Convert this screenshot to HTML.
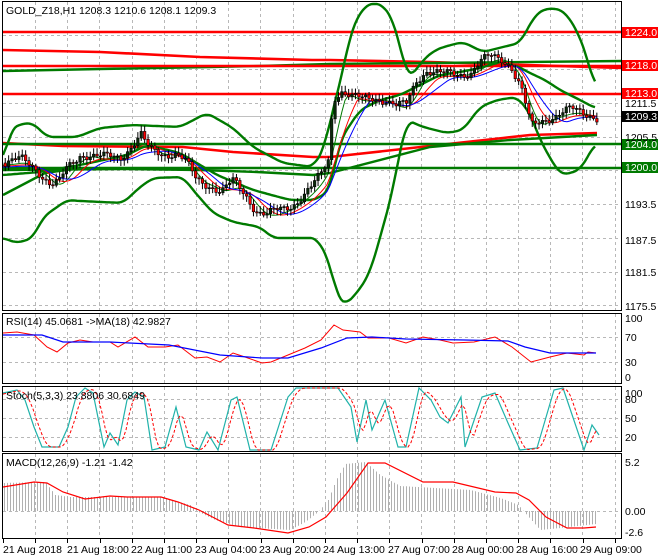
<!DOCTYPE html>
<html><head><meta charset="utf-8"><style>
html,body{margin:0;padding:0;background:#fff;width:660px;height:560px;overflow:hidden}
svg{display:block}
text{font-family:"Liberation Sans",sans-serif;font-size:10.5px;fill:#000}
.g{stroke:#b8b8b8;stroke-width:1;stroke-dasharray:3,3;fill:none}
.bb{stroke:#007a00;stroke-width:2.4;fill:none;stroke-linejoin:round}
.rl{stroke:#ff0000;stroke-width:2.6;fill:none}
</style></head><body>
<svg id="s" width="660" height="560" viewBox="0 0 660 560" xmlns="http://www.w3.org/2000/svg">
<rect width="660" height="560" fill="#fff"/>
<g class="g" id="vg"></g>
<g class="g">
<path d="M3 35.5H621M3 69.5H621M3 103.5H621M3 137.5H621M3 170.5H621M3 204.5H621M3 238.5H621M3 272.5H621M3 305.5H621"/>
<path d="M3 337.5H621M3 362.5H621M3 399.5H621M3 418.5H621M3 437.5H621M3 511.5H621"/>
</g>
<path d="M3 116.5H621" stroke="#c0c0c0" stroke-width="1"/>

<polyline class="rl" points="3,50 100,52 200,57 312,60 330,60 430,62 622,68"/>
<polyline class="bb" points="3,71 100,69 210,67 260,66 330,64 430,63 622,61"/>
<polyline class="rl" points="3,143 63,146 183,147 233,152 313,157 330,157 457,143 503,138 530,135 597,133"/>
<polyline class="bb" points="3,170 120,169 200,170 257,172 313,175 330,173 430,147 510,140 597,135"/>
<polyline class="bb" points="3,195 45,173 80,168"/>

<path d="M3 32H621M3 94H621" stroke="#ff0000" stroke-width="2.6"/>
<path d="M3 66H621" stroke="#ff0000" stroke-width="2.6"/>
<path d="M3 144H621M3 168H621" stroke="#007a00" stroke-width="2.6"/>

<polyline id="bu" class="bb" points="3,163 10,130 20,124 33,123 47,137 77,137 100,128 133,125 180,127 207,113 233,128 253,147 283,163 313,167 325,147 330,120 337,95 343,70 350,35 357,18 365,6 373,3 383,5 393,20 400,45 405,70 410,78 423,60 435,50 447,46 463,42 483,52 503,47 520,43 527,30 535,15 547,8 563,10 577,30 587,57 595,88"/>
<polyline id="bl" class="bb" points="3,238 17,243 33,238 43,217 67,200 80,201 123,203 140,187 153,178 183,177 193,190 213,213 233,222 260,227 273,238 317,238 330,263 337,297 345,305 357,293 370,273 383,227 393,190 400,150 407,120 423,127 447,133 463,130 480,107 497,100 517,97 530,113 540,140 557,170 563,175 580,170 590,153 595,143"/>
<polyline id="bm" class="bb" points="3,175 40,172 80,165 127,155 147,145 180,153 217,175 253,190 290,200 315,200 330,190 340,140 360,110 380,100 400,95 420,85 440,75 460,72 480,68 500,62 515,65 530,73 545,80 560,90 580,100 595,108"/>

<g id="ma"></g>
<g id="cd"></g>

<polyline fill="none" stroke="#ff0000" stroke-width="1" points="3,333 17,332 34,335 47,347 57,352 68,343 80,340 93,342 110,342 118,347 135,337 148,347 165,347 178,345 195,358 207,357 220,362 233,353 245,357 262,363 271,362 288,355 305,348 321,340 334,325 343,330 360,332 368,338 389,338 406,343 423,337 440,340 453,343 474,342 495,337 512,347 531,362 550,357 567,353 584,355 588,352 596,353"/>
<polyline fill="none" stroke="#0000ff" stroke-width="1.2" points="3,335 42,335 63,342 110,342 169,345 220,355 262,358 288,358 321,348 347,338 372,337 406,339 465,340 508,341 525,347 550,353 584,353 596,353"/>
<polyline id="st" fill="none" stroke="#20b2aa" stroke-width="1.2" points="3,393 17,390 25,400 34,427 42,447 59,447 68,427 76,397 85,388 93,393 104,447 110,433 118,445 127,400 135,392 144,397 152,450 165,447 176,407 186,447 199,450 207,432 218,450 231,400 237,397 250,450 271,450 288,397 296,388 330,388 338,388 351,407 357,442 366,400 372,430 385,400 398,447 406,447 419,388 431,400 440,417 448,423 461,397 465,447 482,397 495,393 508,423 520,450 537,448 554,390 563,388 584,450 592,425 599,435"/>
<polyline id="sg" fill="none" stroke="#ff0000" stroke-width="1" stroke-dasharray="3,2" points=""/>
<path id="hist" stroke="#b0b0b0" stroke-width="1" fill="none" d=""/>
<polyline fill="none" stroke="#ff0000" stroke-width="1.2" points="3,487 34,482 47,483 63,492 85,499 110,496 127,497 161,497 178,502 199,510 228,525 254,528 288,533 309,527 326,517 347,493 368,463 385,463 423,482 453,482 495,492 516,493 529,500 546,517 567,528 584,528 596,527"/>

<g fill="none" stroke="#000" stroke-width="1">
<rect x="2.5" y="1.5" width="619" height="309"/>
<rect x="2.5" y="313.5" width="619" height="70"/>
<rect x="2.5" y="386.5" width="619" height="65"/>
<rect x="2.5" y="453.5" width="619" height="85"/>
</g>
<g id="tk" stroke="#000"></g>

<text x="6" y="14">GOLD_Z18,H1  1208.3 1210.6 1208.1 1209.3</text>
<text x="6" y="325">RSI(14) 45.0681  -&gt;MA(18) 42.9827</text>
<text x="6" y="399">Stoch(5,3,3) 23.8806 30.6849</text>
<text x="6" y="466">MACD(12,26,9) -1.21 -1.42</text>

<g>
<rect x="622" y="27" width="36" height="11" fill="#ff0000"/>
<rect x="622" y="60" width="36" height="11" fill="#ff0000"/>
<rect x="622" y="88" width="36" height="11" fill="#ff0000"/>
<rect x="622" y="111" width="36" height="11" fill="#000"/>
<rect x="622" y="139" width="36" height="11" fill="#007a00"/>
<rect x="622" y="162" width="36" height="11" fill="#007a00"/>
<text x="625" y="36" style="fill:#fff">1224.0</text>
<text x="625" y="69" style="fill:#fff">1218.0</text>
<text x="625" y="97" style="fill:#fff">1213.0</text>
<text x="625" y="107">1211.5</text>
<text x="625" y="120" style="fill:#fff">1209.3</text>
<text x="625" y="141">1205.5</text>
<text x="625" y="148" style="fill:#fff">1204.0</text>
<text x="625" y="171" style="fill:#fff">1200.0</text>
<text x="625" y="208">1193.5</text>
<text x="625" y="244">1187.5</text>
<text x="625" y="276">1181.5</text>
<text x="625" y="310">1175.5</text>
<text x="625" y="322">100</text>
<text x="625" y="341">70</text>
<text x="625" y="366">30</text>
<text x="625" y="381">0</text>
<text x="625" y="397">100</text>
<text x="625" y="403">80</text>
<text x="625" y="422">50</text>
<text x="625" y="441">20</text>
<text x="625" y="466">5.2</text>
<text x="625" y="515">0.00</text>
<text x="625" y="536">-2.6</text>
</g>
<g>
<text x="3" y="553">21 Aug 2018</text>
<text x="67" y="553">21 Aug 18:00</text>
<text x="131" y="553">22 Aug 11:00</text>
<text x="195" y="553">23 Aug 04:00</text>
<text x="259" y="553">23 Aug 20:00</text>
<text x="323" y="553">24 Aug 13:00</text>
<text x="388" y="553">27 Aug 07:00</text>
<text x="452" y="553">28 Aug 00:00</text>
<text x="516" y="553">28 Aug 16:00</text>
<text x="580" y="553">29 Aug 09:00</text>
</g>
</svg>
<script>
(function(){
var NS="http://www.w3.org/2000/svg";
function el(t,a,p){var e=document.createElementNS(NS,t);for(var k in a)e.setAttribute(k,a[k]);p.appendChild(e);return e;}
var vg=document.getElementById('vg'),d='';
for(var x=35;x<621;x+=32.2){var xx=Math.round(x)+.5;d+='M'+xx+' 2V310M'+xx+' 314V383M'+xx+' 387V451M'+xx+' 454V538';}
el('path',{d:d},vg);
var tk=document.getElementById('tk'),td='';
for(var x=3;x<621;x+=32.2){var xx=Math.round(x)+.5;td+='M'+xx+' 539V543';}
el('path',{d:td},tk);
function interp(pts,x){for(var i=1;i<pts.length;i++){if(x<=pts[i][0]){var a=pts[i-1],b=pts[i];return a[1]+(b[1]-a[1])*(x-a[0])/(b[0]-a[0]);}}return pts[pts.length-1][1];}
function parse(id){return document.getElementById(id).getAttribute('points').trim().split(/\s+/).map(function(p){return p.split(',').map(Number);});}
// smooth bollinger lines
['bu','bl','bm'].forEach(function(id){var pts=parse(id),s='';for(var x=3;x<=595;x+=2){var y=0,n=0;for(var k=-6;k<=6;k+=2){y+=interp(pts,Math.min(595,Math.max(3,x+k)));n++;}s+=x+','+(y/n).toFixed(1)+' ';}document.getElementById(id).setAttribute('points',s);});
var P=[[3,163],[20,160],[35,168],[50,185],[58,183],[65,170],[80,153],[100,158],[120,156],[130,146],[140,136],[148,150],[160,153],[175,153],[185,163],[195,180],[210,185],[220,192],[232,182],[245,195],[255,210],[265,215],[280,210],[290,205],[300,197],[310,188],[320,175],[327,160],[332,98],[340,90],[350,97],[360,100],[375,97],[385,100],[395,107],[405,105],[415,80],[425,70],[440,75],[450,74],[460,73],[470,72],[480,62],[490,57],[500,58],[510,65],[515,78],[520,88],[525,108],[530,127],[535,124],[545,118],[560,113],[570,110],[580,113],[590,114],[596,117]];
var ma=document.getElementById('ma');
function maLine(off,lag,col,w){var s='';for(var x=3;x<=597;x+=3){var y=0,n=0;for(var k=0;k<lag;k+=3){y+=interp(P,Math.max(3,x-k));n++;}s+=x+','+(y/n+off).toFixed(1)+' ';}el('polyline',{points:s,fill:'none',stroke:col,'stroke-width':w},ma);}
maLine(2,18,'#007a00',1);maLine(3,30,'#ff0000',1);maLine(4,42,'#0000ff',1);
var cd=document.getElementById('cd');var prev=interp(P,3);
for(var x=4;x<=596;x+=3.4){var c=interp(P,x)+(Math.sin(x*1.7)*4)+(Math.sin(x*0.53)*2);var o=prev;prev=c;
var top=Math.min(o,c),bot=Math.max(o,c);if(bot-top<1)bot=top+1;
var up=c<o;
el('line',{x1:x+1.25,x2:x+1.25,y1:top-2-Math.abs(Math.sin(x))*4,y2:bot+2+Math.abs(Math.cos(x))*4,stroke:'#000','stroke-width':1},cd);
el('rect',{x:x,y:top,width:2.5,height:bot-top,fill:up?'#0a2a0a':'#ff0000',stroke:'#000','stroke-width':0.6},cd);}
var st=parse('st');
var sg='';for(var x=3;x<=597;x+=3){var y=(interp(st,x-2)+interp(st,x-5)+interp(st,x-8))/3;sg+=x+','+y.toFixed(1)+' ';}
document.getElementById('sg').setAttribute('points',sg);
var H=[[3,483],[45,482],[55,495],[70,497],[160,497],[190,505],[196,511],[215,520],[240,527],[290,530],[305,522],[318,512],[328,500],[336,480],[345,464],[365,462],[380,475],[400,486],[470,490],[500,498],[518,505],[524,512],[540,530],[560,528],[596,524]];
var hd='';for(var x=4;x<=597;x+=3){var y=interp(H,x);hd+='M'+(x+.5)+' 511V'+y.toFixed(1);}
document.getElementById('hist').setAttribute('d',hd);
})();
</script>
</body></html>
